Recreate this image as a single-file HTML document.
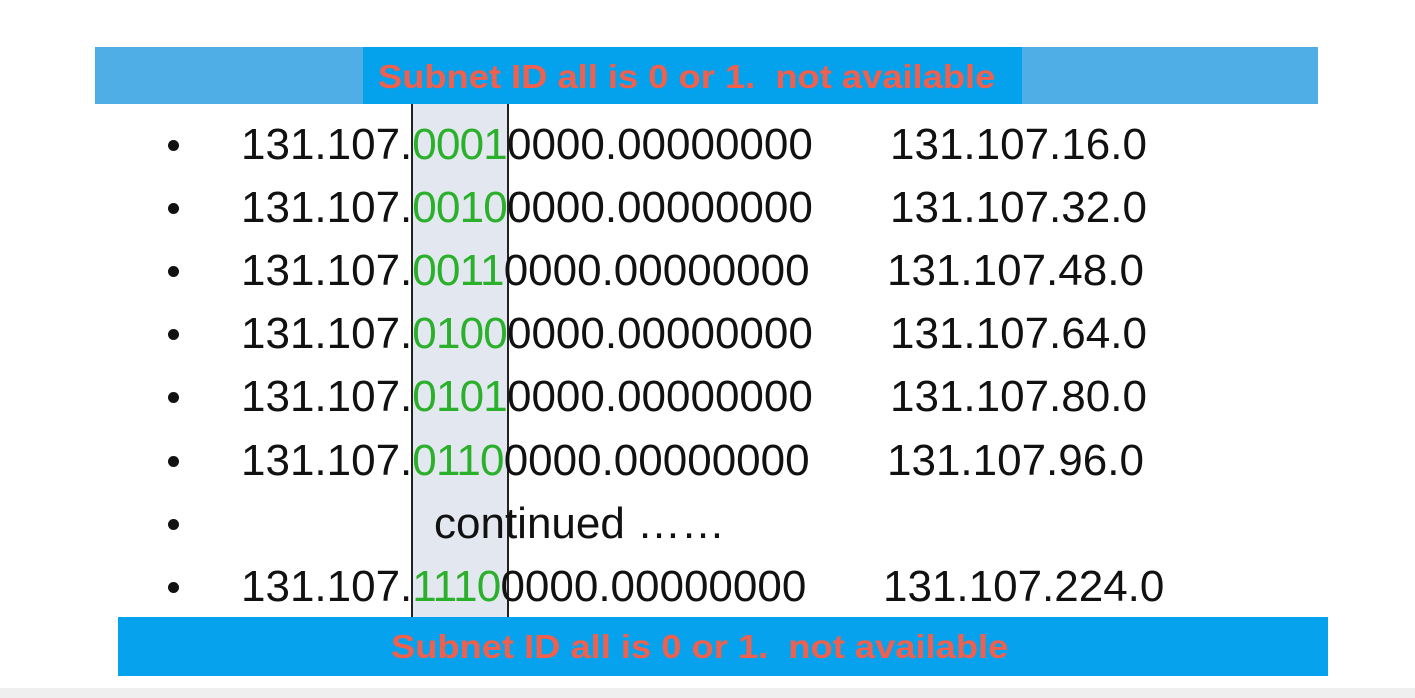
<!DOCTYPE html>
<html><head><meta charset="utf-8"><style>
body{margin:0;width:1415px;height:698px;background:#fff;position:relative;overflow:hidden;font-family:"Liberation Sans",Arial,sans-serif}
.a{position:absolute}
.bar{position:absolute;color:#f0604c;font-weight:bold;font-size:33px;white-space:pre;transform-origin:left center}
.row{position:absolute;font-size:44px;color:#111;line-height:50px;white-space:pre}
.g{color:#2bb02b;letter-spacing:-0.8px}
.dot{position:absolute;left:168px;width:11px;height:11px;border-radius:50%;background:#111}
</style></head><body>
<div class="a" style="left:95px;top:47px;width:1223px;height:57px;background:#4faee6"></div>
<div class="a" style="left:363px;top:47px;width:659px;height:57px;background:#04a1ed"></div>
<div class="bar" style="left:378px;top:58px;transform:scaleX(1.1)">Subnet ID all is 0 or 1.  not available</div>
<div class="a" style="left:411px;top:104px;width:94px;height:513px;background:#e3e7ef;border-left:2px solid #222;border-right:2px solid #222"></div>
<div class="a" style="left:118px;top:617px;width:1210px;height:59px;background:#06a2ee"></div>
<div class="bar" style="left:391px;top:628px;transform:scaleX(1.1)">Subnet ID all is 0 or 1.  not available</div>
<div class="a" style="left:0;top:688px;width:1415px;height:10px;background:#efefef"></div>

<div class="dot" style="top:140px"></div><div class="row" style="left:241px;top:120px">131.107.<span class="g">0001</span>0000.00000000</div><div class="row" style="left:890px;top:120px">131.107.16.0</div>
<div class="dot" style="top:203px"></div><div class="row" style="left:241px;top:183px">131.107.<span class="g">0010</span>0000.00000000</div><div class="row" style="left:890px;top:183px">131.107.32.0</div>
<div class="dot" style="top:266px"></div><div class="row" style="left:241px;top:246px">131.107.<span class="g">0011</span>0000.00000000</div><div class="row" style="left:887px;top:246px">131.107.48.0</div>
<div class="dot" style="top:329px"></div><div class="row" style="left:241px;top:309px">131.107.<span class="g">0100</span>0000.00000000</div><div class="row" style="left:890px;top:309px">131.107.64.0</div>
<div class="dot" style="top:392px"></div><div class="row" style="left:241px;top:372px">131.107.<span class="g">0101</span>0000.00000000</div><div class="row" style="left:890px;top:372px">131.107.80.0</div>
<div class="dot" style="top:456px"></div><div class="row" style="left:241px;top:436px">131.107.<span class="g">0110</span>0000.00000000</div><div class="row" style="left:887px;top:436px">131.107.96.0</div>
<div class="dot" style="top:519px"></div><div class="row" style="left:434px;top:499px">continued ……</div>
<div class="dot" style="top:582px"></div><div class="row" style="left:241px;top:562px">131.107.<span class="g">1110</span>0000.00000000</div><div class="row" style="left:883px;top:562px">131.107.224.0</div>
</body></html>
